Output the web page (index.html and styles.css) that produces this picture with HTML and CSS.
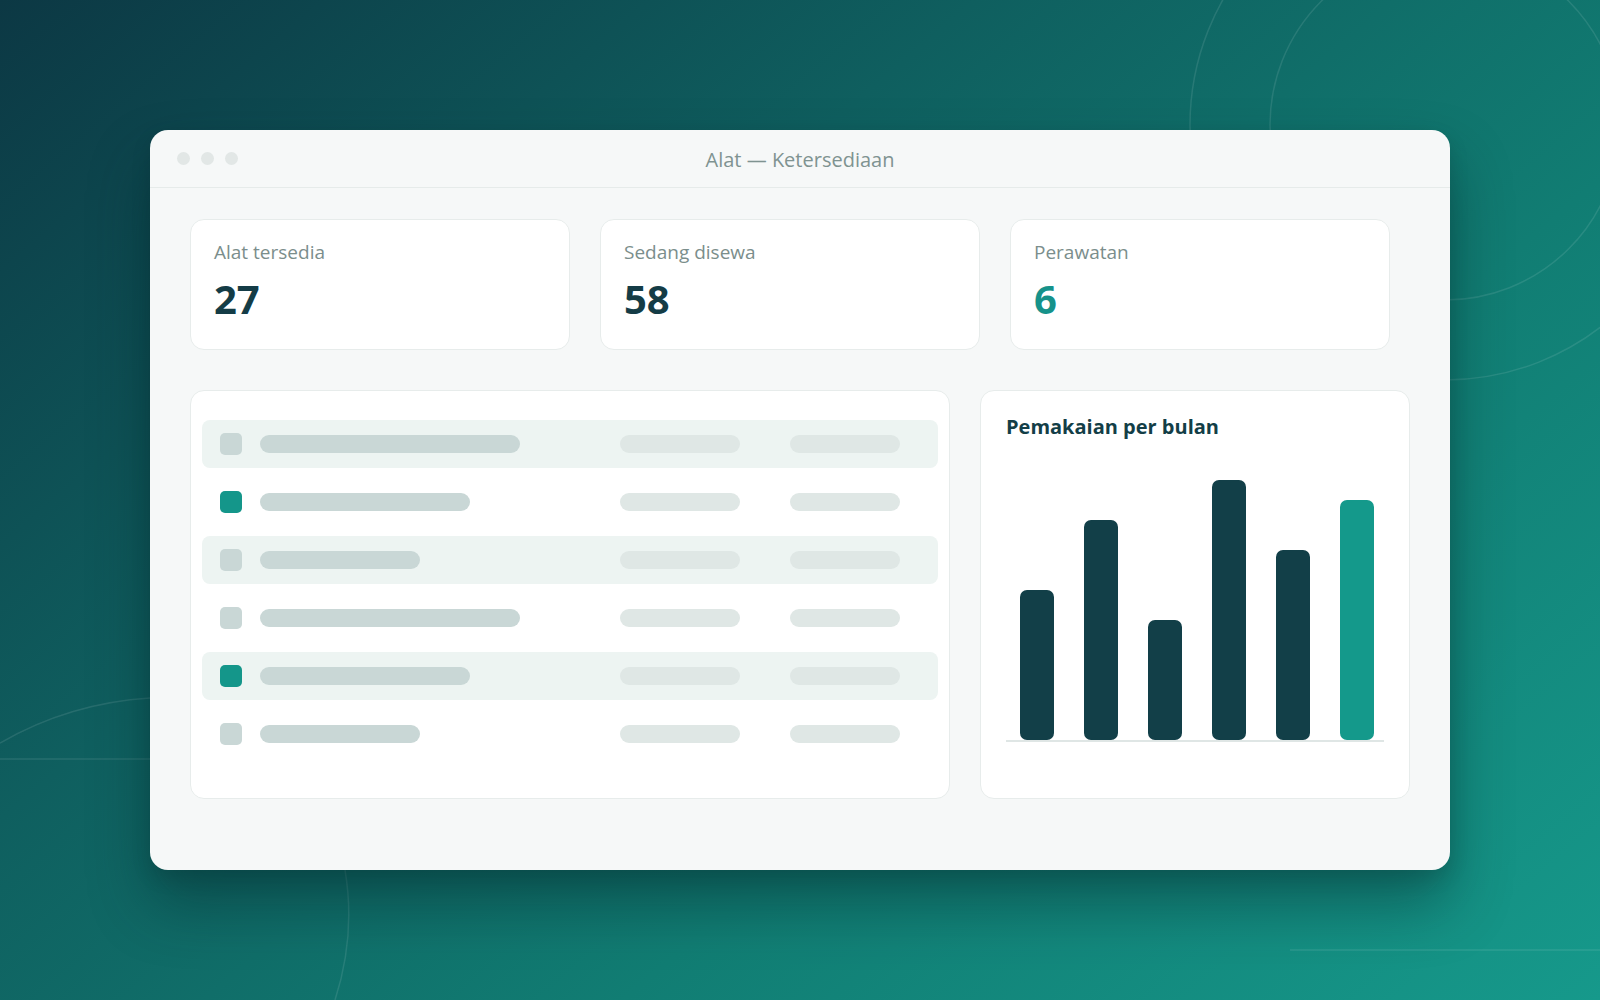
FILE: index.html
```html
<!DOCTYPE html>
<html lang="id">
<head>
    <meta charset="UTF-8" />
    <meta name="viewport" content="width=device-width, initial-scale=1.0" />
    <title>Alat — Ketersediaan</title>
    <link rel="stylesheet" href="styles.css">
</head>
<body>
    <div class="scene">
        <svg class="decor" width="1600" height="1000" viewBox="0 0 1600 1000">
            <circle cx="1445" cy="125" r="175" />
            <circle cx="1445" cy="125" r="255" />
            <path d="M0 743 A343 343 0 0 1 150 698" />
            <path d="M0 759 H150" />
            <path d="M345 870 Q356 935 335 1000" />
            <path d="M1290 950 H1600" />
        </svg>

        <div class="window">
            <div class="titlebar">
                <div class="dots"><span></span><span></span><span></span></div>
                <div class="title">Alat — Ketersediaan</div>
                <div></div>
            </div>

            <div class="content">
                <div class="stats">
                    <div class="stat">
                        <div class="stat-label">Alat tersedia</div>
                        <div class="stat-value">27</div>
                    </div>
                    <div class="stat">
                        <div class="stat-label">Sedang disewa</div>
                        <div class="stat-value">58</div>
                    </div>
                    <div class="stat">
                        <div class="stat-label">Perawatan</div>
                        <div class="stat-value accent">6</div>
                    </div>
                </div>

                <div class="panels">
                    <div class="panel list">
                        <div class="row shaded">
                            <span class="check"></span>
                            <span class="cell"><i class="line name" style="width:260px"></i></span>
                            <span class="cell"><i class="line" style="width:120px"></i></span>
                            <span class="cell"><i class="line" style="width:110px"></i></span>
                        </div>
                        <div class="row">
                            <span class="check on"></span>
                            <span class="cell"><i class="line name" style="width:210px"></i></span>
                            <span class="cell"><i class="line" style="width:120px"></i></span>
                            <span class="cell"><i class="line" style="width:110px"></i></span>
                        </div>
                        <div class="row shaded">
                            <span class="check"></span>
                            <span class="cell"><i class="line name" style="width:160px"></i></span>
                            <span class="cell"><i class="line" style="width:120px"></i></span>
                            <span class="cell"><i class="line" style="width:110px"></i></span>
                        </div>
                        <div class="row">
                            <span class="check"></span>
                            <span class="cell"><i class="line name" style="width:260px"></i></span>
                            <span class="cell"><i class="line" style="width:120px"></i></span>
                            <span class="cell"><i class="line" style="width:110px"></i></span>
                        </div>
                        <div class="row shaded">
                            <span class="check on"></span>
                            <span class="cell"><i class="line name" style="width:210px"></i></span>
                            <span class="cell"><i class="line" style="width:120px"></i></span>
                            <span class="cell"><i class="line" style="width:110px"></i></span>
                        </div>
                        <div class="row">
                            <span class="check"></span>
                            <span class="cell"><i class="line name" style="width:160px"></i></span>
                            <span class="cell"><i class="line" style="width:120px"></i></span>
                            <span class="cell"><i class="line" style="width:110px"></i></span>
                        </div>
                    </div>

                    <div class="panel chart-panel">
                        <h2>Pemakaian per bulan</h2>
                        <div class="chart">
                            <div class="bar" style="height:150px"></div>
                            <div class="bar" style="height:220px"></div>
                            <div class="bar" style="height:120px"></div>
                            <div class="bar" style="height:260px"></div>
                            <div class="bar" style="height:190px"></div>
                            <div class="bar current" style="height:240px"></div>
                        </div>
                    </div>
                </div>
            </div>
        </div>
    </div>
</body>
</html>
```

FILE: styles.css
```css
/* Global Reset */
* { box-sizing: border-box; margin: 0; padding: 0; }
body {
    font-family: "Open Sans", "Noto Sans", sans-serif;
    width: 1600px;
    height: 1000px;
    overflow: hidden;
    background: linear-gradient(140deg, #0c3844 0%, #0f5f5f 35%, #117d73 65%, #16998b 100%);
    color: #143e47;
}

.scene {
    position: relative;
    width: 1600px;
    height: 1000px;
    padding: 130px 0 0 150px;
}

/* background rings and lines */
.decor {
    position: absolute;
    left: 0;
    top: 0;
    fill: none;
    stroke: rgba(255, 255, 255, 0.1);
    stroke-width: 1.5;
}

.window {
    position: relative;
    width: 1300px;
    height: 740px;
    background: #f6f8f8;
    border-radius: 18px;
    box-shadow: 0 34px 60px rgba(4, 40, 44, 0.45), 0 8px 20px rgba(0, 0, 0, 0.12);
    overflow: hidden;
}

.titlebar {
    height: 58px;
    border-bottom: 1px solid #e6ebea;
    display: grid;
    grid-template-columns: 1fr auto 1fr;
    align-items: center;
    padding: 0 27px;
}
.dots {
    display: flex;
    gap: 11px;
}
.dots span {
    width: 13px;
    height: 13px;
    border-radius: 50%;
    background: #e2e7e6;
}
.title {
    font-size: 20px;
    color: #7f9391;
    margin-top: 1px;
}

.content {
    padding: 31px 40px 0;
}

/* Stat cards */
.stats {
    display: grid;
    grid-template-columns: repeat(3, 380px);
    gap: 30px;
}
.stat {
    height: 131px;
    background: #fff;
    border: 1px solid #e7eceb;
    border-radius: 14px;
    padding: 19px 23px;
}
.stat-label {
    font-size: 19px;
    color: #7b8e8c;
}
.stat-value {
    margin-top: 14px;
    font-size: 40px;
    line-height: 40px;
    font-weight: 700;
    color: #143c46;
}
.stat-value.accent {
    color: #16928a;
}

/* Lower panels */
.panels {
    margin-top: 40px;
    display: grid;
    grid-template-columns: 760px 430px;
    gap: 30px;
}
.panel {
    height: 409px;
    background: #fff;
    border: 1px solid #e7eceb;
    border-radius: 14px;
}

.list {
    padding: 29px 11px 0;
    display: flex;
    flex-direction: column;
    gap: 10px;
}
.row {
    height: 48px;
    border-radius: 8px;
    padding-left: 18px;
    display: grid;
    grid-template-columns: 40px 360px 170px 110px;
    align-items: center;
}
.row.shaded {
    background: #edf4f2;
}
.check {
    width: 22px;
    height: 22px;
    border-radius: 5px;
    background: #c9d7d6;
}
.check.on {
    background: #14968a;
}
.cell {
    display: flex;
}
.line {
    display: block;
    height: 18px;
    border-radius: 9px;
    background: #dfe7e5;
}
.line.name {
    background: #c9d7d6;
}

.chart-panel {
    padding: 22px 25px 0;
}
.chart-panel h2 {
    font-size: 20px;
    font-weight: 700;
    color: #133e47;
}
.chart {
    height: 302px;
    border-bottom: 2px solid #dfe6e5;
    display: flex;
    align-items: flex-end;
    gap: 30px;
    padding-left: 14px;
}
.bar {
    width: 34px;
    border-radius: 7px;
    background: #123f48;
}
.bar.current {
    background: #14998b;
}
```
